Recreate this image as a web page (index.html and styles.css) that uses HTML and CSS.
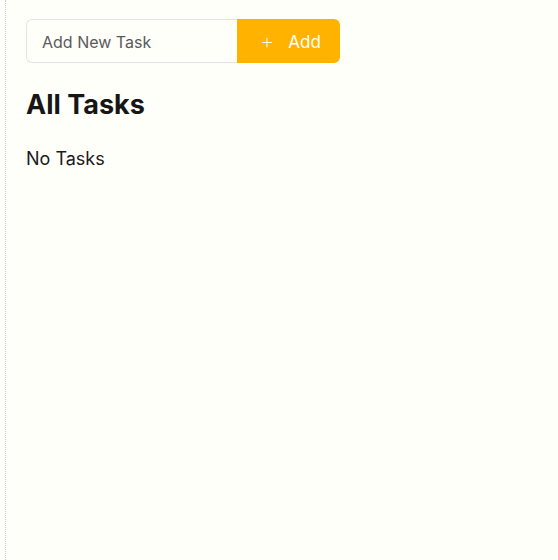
FILE: index.html
```html
<!DOCTYPE html>
<html>
<head>
<meta charset="utf-8">
<link rel="stylesheet" href="styles.css">
</head>
<body>
<div class="page">
  <form class="add-form">
    <input class="task-input" type="text" placeholder="Add New Task">
    <button class="add-btn" type="button"><span class="plus">+</span><span>Add</span></button>
  </form>
  <h1 class="title">All Tasks</h1>
  <p class="empty">No Tasks</p>
</div>
</body>
</html>
```
FILE: styles.css
```css
html, body {
  margin: 0;
  padding: 0;
  background: #fffffa;
}
body {
  padding-left: 5px;
  font-family: Inter, "Open Sans", sans-serif;
}
.page {
  border-left: 1px dotted #c9cde0;
  min-height: 560px;
  box-sizing: border-box;
  padding: 19px 0 0 20px;
}
.add-form {
  display: flex;
  width: 314px;
  height: 44px;
}
.task-input {
  flex: 1;
  min-width: 0;
  box-sizing: border-box;
  border: 1px solid #e4e4e2;
  border-right: none;
  border-radius: 6px 0 0 6px;
  background: #fffffa;
  padding: 2px 15px 0 15px;
  font-family: Inter, "Open Sans", sans-serif;
  font-size: 16px;
  color: #555;
  outline: none;
}
.task-input::placeholder {
  color: #5a5a5a;
}
.add-btn {
  width: 103px;
  border: none;
  border-radius: 0 6px 6px 0;
  background: #ffb300;
  color: #fff;
  font-family: Inter, "Open Sans", sans-serif;
  font-size: 17px;
  display: flex;
  align-items: center;
  justify-content: center;
  gap: 14px;
  padding: 2px 0 0 4px;
}
.plus {
  font-weight: 200;
  font-size: 22px;
  line-height: 1;
  margin-top: -2px;
}
.title {
  margin: 26px 0 0 0;
  font-size: 27px;
  font-weight: 700;
  color: #161616;
  line-height: 32px;
}
.empty {
  margin: 26px 0 0 0;
  font-size: 18px;
  color: #1a1a1a;
  line-height: 24px;
}
```
